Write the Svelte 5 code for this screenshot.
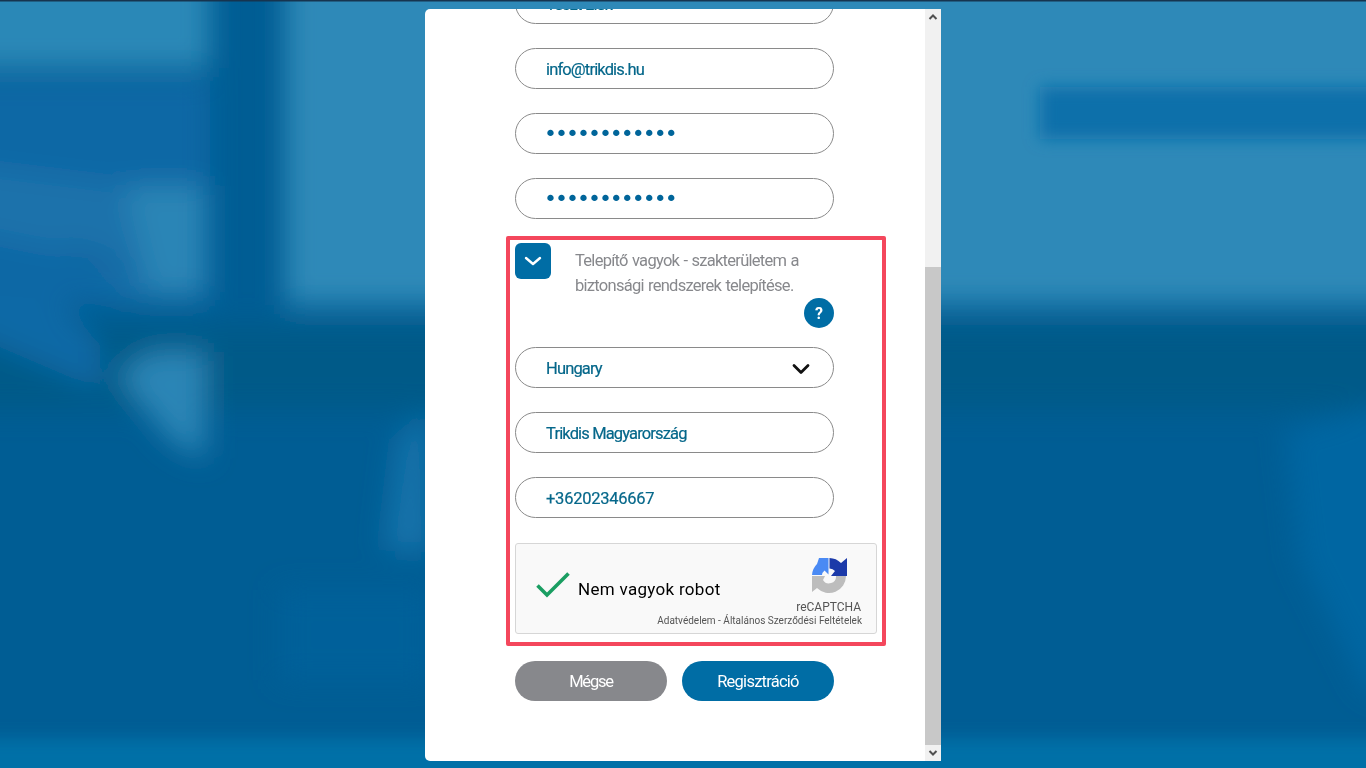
<script>
	let email = 'info@trikdis.hu';
	let password = 'abcdefghijkl';
	let company = 'Trikdis Magyarország';
	let phone = '+36202346667';
	let installer = true;
</script>

<!-- blurred photo behind the dialog -->
<svg class="backdrop" viewBox="0 0 1366 768" aria-hidden="true">
	<defs>
		<filter id="soft" x="-20%" y="-20%" width="140%" height="140%"><feGaussianBlur stdDeviation="14" /></filter>
		<filter id="softer" x="-20%" y="-20%" width="140%" height="140%"><feGaussianBlur stdDeviation="8" /></filter>
	</defs>
	<rect width="1366" height="768" fill="#005d94" />
	<g filter="url(#soft)">
		<rect x="-40" y="325" width="1460" height="85" fill="#005a88" />
		<rect x="285" y="-40" width="1140" height="345" fill="#2e89b8" />
		<rect x="-40" y="-40" width="250" height="108" fill="#2c88b7" />
		<rect x="-40" y="78" width="250" height="225" fill="#0b68a5" />
		<polygon points="-40,165 125,185 205,185 205,300 130,300 60,250 -40,230" fill="#1a72ab" />
		<polygon points="125,186 205,186 205,292 150,292" fill="#2a85b6" />
		<polygon points="65,240 125,262 130,282 75,262" fill="#0a65a0" />
		<polygon points="-40,292 60,300 100,345 100,390 -40,330" fill="#0b69a6" />
		<polygon points="118,375 150,352 205,352 205,460 170,440" fill="#2a85b6" />
		<polygon points="385,550 398,440 430,410 430,553" fill="#1273ab" />
		<polygon points="1285,430 1420,395 1420,700 1366,690 1300,560" fill="#0466a2" />
		<polygon points="280,590 430,590 430,680 280,680" fill="#02609a" />
	</g>
	<g filter="url(#softer)">
		<rect x="1040" y="87" width="380" height="52" fill="#1070aa" />
		<rect x="-40" y="738" width="1460" height="60" fill="#006fa7" />
	</g>
	<rect width="1366" height="1.500" fill="#16344f" />
</svg>

<main class="page">
	<section class="card">
		<div class="scroll">
			<form class="form" on:submit|preventDefault>
				<input class="field" value="Teszt Elek" />
				<input class="field" bind:value={email} />
				<input class="field secret" type="password" bind:value={password} />
				<input class="field secret" type="password" bind:value={password} />

				<div class="marked">
					<div class="installer">
						<button type="button" class="toggle" aria-label="Telepítő" on:click={() => (installer = !installer)}>
							<svg width="18" height="10" viewBox="0 0 18 10">
								<path d="M2 2l7 6 7-6" fill="none" stroke="#fff" stroke-width="2.400" stroke-linecap="round" stroke-linejoin="round" />
							</svg>
						</button>
						<p>Telepítő vagyok - szakterületem a biztonsági rendszerek telepítése.</p>
					</div>
					<div class="help-row"><span class="help">?</span></div>

					<div class="field select">
						<span>Hungary</span>
						<svg width="18" height="12" viewBox="0 0 18 12">
							<path d="M2 2.500l7 7 7-7" fill="none" stroke="#111" stroke-width="2.800" stroke-linecap="round" stroke-linejoin="round" />
						</svg>
					</div>
					<input class="field" bind:value={company} />
					<input class="field phone" bind:value={phone} />

					<div class="captcha">
						<svg class="tick" width="36" height="28" viewBox="0 0 36 28">
							<path d="M2.500 14.500l9.500 9.500L33.500 2.500" fill="none" stroke="#1a9e62" stroke-width="3.600" />
						</svg>
						<span class="robot">Nem vagyok robot</span>
						<div class="brand">
							<svg width="36" height="38" viewBox="0 0 36 38">
								<path fill="#bdbdbd" d="M35 19A17 17 0 0 1 6 31L1 35V19H14L12 23A7 7 0 0 0 25 19Z" />
								<path fill="#4a8af4" d="M1 18A17 17 0 0 1 6 7L8 1H17.500V17.500L13.500 13.500A7 7 0 0 0 11 18Z" />
								<path fill="#1c3aa9" d="M18.500 1A17 17 0 0 1 30 6L36 1V19H20L24 14A7 7 0 0 0 18.500 11.500Z" />
							</svg>
							<span class="name">reCAPTCHA</span>
						</div>
						<span class="terms">Adatvédelem - Általános Szerződési Feltételek</span>
					</div>
				</div>

				<div class="actions">
					<button type="button" class="btn cancel">Mégse</button>
					<button type="submit" class="btn submit">Regisztráció</button>
				</div>
			</form>
		</div>

		<div class="scrollbar">
			<svg class="arrow" width="16" height="16" viewBox="0 0 16 16"><path d="M4.500 10L8 6.500l3.500 3.500" fill="none" stroke="#505050" stroke-width="2" /></svg>
			<div class="track"><div class="thumb"></div></div>
			<svg class="arrow" width="16" height="16" viewBox="0 0 16 16"><path d="M4.500 6L8 9.500 11.500 6" fill="none" stroke="#505050" stroke-width="2" /></svg>
		</div>
	</section>
</main>

<style>
	:global(body) {
		overflow: hidden;
		font-family: Roboto, 'Liberation Sans', sans-serif;
	}

	.backdrop {
		position: fixed;
		inset: 0;
		width: 100%;
		height: 100%;
	}

	.page {
		position: relative;
		display: flex;
		justify-content: center;
		padding-top: 9px;
	}
	.card {
		display: flex;
		width: 516px;
		height: 752px;
		background: #fff;
		border-radius: 5px 0 0 5px;
		overflow: hidden;
	}
	.scroll {
		flex: 1;
		overflow: hidden;
		padding-left: 90px;
	}
	.form {
		display: flex;
		flex-direction: column;
		align-items: flex-start;
		gap: 24px;
		width: 319px;
		margin-top: -26px;
	}

	.field {
		box-sizing: border-box;
		width: 319px;
		height: 41px;
		padding: 2px 30px 0;
		border: 1px solid #8a8a8a;
		border-radius: 21px;
		background: #fff;
		color: #05678a;
		font: 16.500px Roboto, sans-serif;
		letter-spacing: -0.85px;
		-webkit-text-stroke: 0.2px #05678a;
		outline: none;
		flex: none;
	}
	.phone {
		letter-spacing: -0.25px;
	}
	.secret {
		padding: 0 30px 0 28px;
		color: #00659a;
		font: 22px 'DejaVu Sans', sans-serif;
		letter-spacing: -2px;
		-webkit-text-stroke: 0;
	}
	.select {
		display: flex;
		align-items: center;
		justify-content: space-between;
		padding-right: 23px;
	}

	.marked {
		display: flex;
		flex-direction: column;
		align-items: flex-start;
		gap: 24px;
		box-sizing: border-box;
		width: 380px;
		height: 410px;
		margin: -7px 0 0 -9px;
		padding: 3px 5px 0;
		border: 4px solid #f4475c;
		border-radius: 2px;
	}
	.installer {
		display: flex;
		gap: 24px;
		width: 319px;
	}
	.toggle {
		flex: none;
		display: flex;
		align-items: center;
		justify-content: center;
		width: 36px;
		height: 36px;
		padding: 0;
		border: 0;
		border-radius: 6px;
		background: #006da5;
	}
	.installer p {
		margin: 5px 0 0;
		color: #87888c;
		font-size: 16.500px;
		line-height: 25px;
		letter-spacing: -0.72px;
		word-spacing: 0.8px;
	}
	.help-row {
		display: flex;
		justify-content: flex-end;
		width: 319px;
		margin: -24px 0 -5px;
	}
	.help {
		display: flex;
		align-items: center;
		justify-content: center;
		width: 30px;
		height: 30px;
		border-radius: 50%;
		background: #006da5;
		color: #fff;
		font-size: 16px;
		font-weight: 700;
	}

	.captcha {
		position: relative;
		display: flex;
		align-items: flex-start;
		box-sizing: border-box;
		width: 362px;
		height: 91px;
		margin-top: 1px;
		border: 1px solid #d6d6d6;
		border-radius: 3px;
		background: #f9f9f9;
	}
	.tick {
		margin: 27px 0 0 19px;
	}
	.robot {
		margin: 35px 0 0 7px;
		color: #000;
		font-size: 17px;
		line-height: 20px;
		letter-spacing: 0.3px;
	}
	.brand {
		display: flex;
		flex-direction: column;
		align-items: center;
		margin: 13px 0 0 auto;
		padding-right: 15px;
	}
	.name {
		margin-top: 5px;
		color: #555;
		font-size: 12px;
		line-height: 14px;
	}
	.terms {
		position: absolute;
		right: 14px;
		bottom: 6px;
		color: #555;
		font-size: 10px;
		line-height: 12px;
		white-space: nowrap;
	}

	.actions {
		display: flex;
		justify-content: space-between;
		width: 319px;
		margin-top: -9px;
	}
	.btn {
		width: 152px;
		height: 40px;
		border: 0;
		border-radius: 20px;
		color: #fff;
		font: 16.500px Roboto, sans-serif;
		letter-spacing: -0.75px;
	}
	.cancel {
		background: #87888c;
		letter-spacing: -1.2px;
	}
	.submit {
		background: #006da5;
	}

	.scrollbar {
		flex: none;
		display: flex;
		flex-direction: column;
		width: 16px;
		background: #f1f1f1;
	}
	.arrow {
		flex: none;
	}
	.track {
		flex: 1;
		display: flex;
		flex-direction: column;
		justify-content: flex-end;
	}
	.thumb {
		height: 478px;
		background: #c8c8c8;
	}
</style>
